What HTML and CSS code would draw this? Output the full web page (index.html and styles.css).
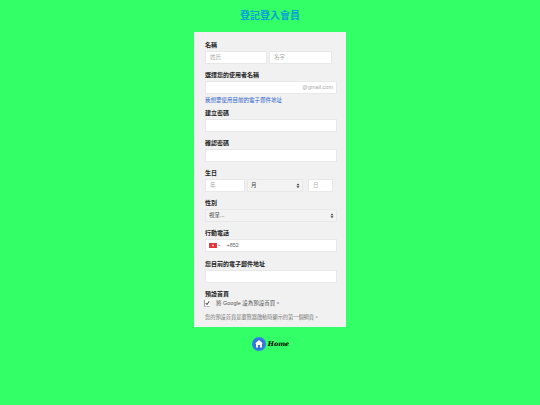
FILE: index.html
```html
<!DOCTYPE html>
<html lang="zh-Hant">
<head>
<meta charset="utf-8">
<title>登記登入會員</title>
<link rel="stylesheet" href="styles.css">
</head>
<body>
<h1 class="title">登記登入會員</h1>
<main class="card">
  <div class="field">
    <div class="label">名稱</div>
    <div class="row">
      <div class="input w-last ph">姓氏</div>
      <div class="input w-first ph">名字</div>
    </div>
  </div>
  <div class="field">
    <div class="label">選擇您的使用者名稱</div>
    <div class="input full suffix"><span class="ph-g">@gmail.com</span></div>
    <a class="link">我想要使用目前的電子郵件地址</a>
  </div>
  <div class="field f-pw">
    <div class="label">建立密碼</div>
    <div class="input full"></div>
  </div>
  <div class="field">
    <div class="label">確認密碼</div>
    <div class="input full"></div>
  </div>
  <div class="field">
    <div class="label">生日</div>
    <div class="row">
      <div class="input w-year ph">年</div>
      <div class="select w-month"><span>月</span><svg class="updown" viewBox="0 0 6 8"><path d="M3 0.5 5.2 3.2H.8zM3 7.5.8 4.8h4.4z"/></svg></div>
      <div class="input w-day ph">日</div>
    </div>
  </div>
  <div class="field">
    <div class="label">性別</div>
    <div class="select full"><span>視呈...</span><svg class="updown" viewBox="0 0 6 8"><path d="M3 0.5 5.2 3.2H.8zM3 7.5.8 4.8h4.4z"/></svg></div>
  </div>
  <div class="field">
    <div class="label">行動電話</div>
    <div class="input full phone">
      <svg class="flag" viewBox="0 0 11 7"><rect width="11" height="7" fill="#e4323a"/><circle cx="5.5" cy="3.5" r="1.5" fill="#f7c9c9"/></svg>
      <svg class="caret" viewBox="0 0 4 2"><path d="M0 0h4L2 2z"/></svg>
      <span class="dial">+852</span>
    </div>
  </div>
  <div class="field">
    <div class="label">您目前的電子郵件地址</div>
    <div class="input full tall"></div>
  </div>
  <div class="field">
    <div class="label">預設首頁</div>
    <div class="check-row">
      <span class="check"><svg viewBox="0 0 6 6"><path d="M1 3 2.4 5 5 .8" fill="none" stroke="#111" stroke-width="1"/></svg></span>
      <span class="check-text">將 Google 設為預設首頁。</span>
    </div>
    <p class="note">您的預設首頁是瀏覽器啟動時顯示的第一個網頁。</p>
  </div>
</main>
<footer class="logo">
  <svg class="logo-icon" viewBox="0 0 14 14">
    <circle cx="7" cy="7" r="7" fill="#2f7fe8"/>
    <circle cx="7" cy="7" r="5.2" fill="#3c6fd0"/>
    <path d="M7 3 11 6.6H10V10.4H8V8H6V10.4H4V6.6H3z" fill="#fff"/>
  </svg>
  <span class="logo-text">Home</span>
</footer>
</body>
</html>
```
FILE: styles.css
```css
* { box-sizing: border-box; }
html, body { margin: 0; padding: 0; }
body {
  width: 540px;
  height: 405px;
  overflow: hidden;
  background: #33ff66;
  font-family: "Liberation Sans", "Noto Sans CJK TC", sans-serif;
  display: flex;
  flex-direction: column;
  align-items: center;
}
.title {
  margin: 10px 0 0;
  height: 22px;
  font-size: 10px;
  line-height: 12px;
  font-weight: 700;
  color: #0a9fd8;
}
.card {
  flex: none;
  width: 152px;
  height: 295px;
  background: #f1f1f1;
  padding: 9px 10px 0 11px;
  display: flex;
  flex-direction: column;
  gap: 7.5px;
}
.field { display: flex; flex-direction: column; }
.label {
  height: 10px;
  font-size: 6px;
  line-height: 8px;
  font-weight: 700;
  color: #222;
  white-space: nowrap;
}
.row { display: flex; }
.input, .select {
  height: 12.5px;
  font-size: 5.5px;
  line-height: 11px;
  border: 1px solid #e8e8e8;
  background: #fff;
  color: #aaa;
  padding: 0 4px;
  white-space: nowrap;
}
.select {
  background: #f3f3f3;
  color: #444;
  padding: 0 2px 0 3px;
  display: flex;
  align-items: center;
  justify-content: space-between;
}
.updown { width: 4px; height: 5.5px; fill: #333; }
.full { width: 132px; }
.w-last { width: 62px; margin-right: 2px; }
.w-first { width: 63px; }
.w-year { width: 40px; margin-right: 2px; }
.w-month { width: 56px; margin-right: 5px; }
.w-day { width: 25px; }
.suffix { text-align: right; padding-right: 3px; }
.ph-g { color: #aaa; font-size: 5.5px; }
.link {
  display: block;
  margin-top: 2px;
  font-size: 5.5px;
  line-height: 8px;
  color: #2a62c8;
  white-space: nowrap;
}
.f-pw { margin-top: -2px; }
.tall, .phone { height: 13px; }
.phone {
  display: flex;
  align-items: center;
  padding-left: 3px;
  color: #666;
}
.flag { width: 8px; height: 5px; }
.caret { width: 2.5px; height: 1.5px; margin-left: 1px; fill: #666; }
.dial { margin-left: 6px; }
.check-row {
  display: flex;
  align-items: center;
  height: 8px;
  margin-left: -1px;
  margin-top: -1px;
}
.check {
  width: 6px;
  height: 7px;
  background: #fff;
  border-left: 1px solid #999;
  border-bottom: 1px solid #bbb;
  display: flex;
}
.check svg { width: 5px; height: 6px; }
.check-text {
  margin-left: 6px;
  font-size: 5.5px;
  line-height: 8px;
  color: #555;
  white-space: nowrap;
}
.note {
  margin: 6px 0 0;
  font-size: 5.2px;
  line-height: 8px;
  color: #777;
  white-space: nowrap;
}
.logo {
  margin-top: 9px;
  height: 15px;
  display: flex;
  align-items: center;
  gap: 2px;
  margin-right: -1px;
}
.logo-icon { width: 14px; height: 14px; }
.logo-text {
  font-family: "DejaVu Serif", serif;
  font-style: italic;
  font-weight: 700;
  font-size: 6.5px;
  color: #000;
}
```
